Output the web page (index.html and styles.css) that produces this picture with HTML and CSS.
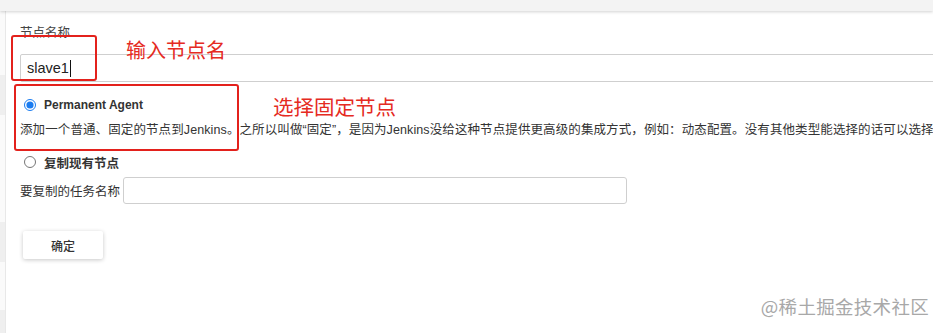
FILE: index.html
```html
<!DOCTYPE html>
<html lang="zh-CN">
<head>
<meta charset="utf-8">
<title>新建节点</title>
<link rel="stylesheet" href="styles.css">
</head>
<body>
<div class="topbar"></div>
<div class="layout">
  <aside class="sidebar">
    <div class="side-block b1"></div>
    <div class="side-block b2"></div>
    <div class="side-block b3"></div>
  </aside>
  <main class="main">
    <div class="field-label">节点名称</div>
    <div class="name-input"><span class="name-value">slave1</span><span class="caret"></span></div>
    <label class="option">
      <input class="radio" type="radio" name="mode" checked>
      <span class="option-title">Permanent Agent</span>
    </label>
    <div class="desc">添加一个普通、固定的节点到Jenkins。之所以叫做“固定”，是因为Jenkins没给这种节点提供更高级的集成方式，例如：动态配置。没有其他类型能选择的话可以选择</div>
    <label class="option option-copy">
      <input class="radio" type="radio" name="mode">
      <span class="option-title cjk">复制现有节点</span>
    </label>
    <div class="copy-row">
      <span class="copy-label">要复制的任务名称</span>
      <input class="copy-input" type="text">
    </div>
    <button class="ok-btn" type="button">确定</button>

    <div class="mark mark-name"></div>
    <div class="mark mark-agent"></div>
    <div class="note note-name">输入节点名</div>
    <div class="note note-agent">选择固定节点</div>
  </main>
</div>
<div class="watermark">@稀土掘金技术社区</div>
</body>
</html>
```

FILE: styles.css
```css
html, body {
  margin: 0;
  padding: 0;
  background: #fff;
  overflow: hidden;
  height: 333px;
}
body {
  font-family: "Liberation Sans", "Noto Sans CJK SC", sans-serif;
  color: #333;
  position: relative;
}
.topbar {
  height: 11px;
  background: #f3f3f3;
  box-shadow: 0 1px 3px rgba(0,0,0,0.18);
  position: relative;
  z-index: 2;
}
.layout {
  display: flex;
  height: 322px;
}
.sidebar {
  width: 5px;
  flex: none;
  border-right: 1px solid #e8e8e8;
  background: #fafafa;
  position: relative;
}
.side-block {
  position: absolute;
  left: 0;
  width: 5px;
  background: #efefef;
}
.side-block.b1 { top: 64px; height: 40px; }
.side-block.b2 { top: 211px; height: 40px; }
.side-block.b3 { top: 299px; height: 30px; }

.main {
  flex: 1;
  padding-left: 14px;
  position: relative;
  min-width: 0;
}
.field-label {
  margin-top: 14px;
  font-size: 12.5px;
  line-height: 16px;
  color: #444;
}
.name-input {
  display: flex;
  align-items: center;
  box-sizing: border-box;
  margin-top: 13px;
  width: 1000px;
  height: 28px;
  border: 1px solid #cfcfcf;
  border-radius: 2px;
  padding: 0 6px;
  font-family: "Liberation Sans", sans-serif;
  font-size: 14.5px;
  color: #222;
}
.caret {
  width: 1px;
  height: 17px;
  margin-left: 1px;
  background: #111;
}
.option {
  display: flex;
  align-items: center;
  height: 20px;
  margin-top: 13px;
}
.radio {
  margin: 0 0 0 4px;
  width: 12px;
  height: 12px;
  accent-color: #1a7cf0;
}
.option-title {
  margin-left: 8px;
  font-size: 12px;
  font-weight: bold;
  color: #333;
}
.option-title.cjk {
  font-size: 12.5px;
}
.desc {
  margin-top: 7px;
  font-size: 12.5px;
  line-height: 16px;
  white-space: nowrap;
  color: #333;
  letter-spacing: 0.1px;
}
.option-copy {
  margin-top: 14px;
}
.copy-row {
  display: flex;
  align-items: center;
  margin-top: 5px;
}
.copy-label {
  font-size: 12.5px;
  color: #333;
  width: 103px;
}
.copy-input {
  box-sizing: border-box;
  width: 504px;
  height: 27px;
  border: 1px solid #cfcfcf;
  border-radius: 3px;
  margin: 0;
  outline: none;
}
.ok-btn {
  display: block;
  margin: 27px 0 0 3px;
  width: 80px;
  height: 28px;
  border: none;
  border-radius: 2px;
  background: #fff;
  box-shadow: 0 1px 4px rgba(0,0,0,0.22);
  font-family: "Noto Sans CJK SC", sans-serif;
  font-size: 12px;
  font-weight: 500;
  color: #333;
  padding: 0;
}
.mark {
  position: absolute;
  box-sizing: border-box;
  border: 2px solid #e3211c;
  border-radius: 3px;
}
.mark-name {
  left: 5px;
  top: 24px;
  width: 86px;
  height: 46px;
}
.mark-agent {
  left: 8px;
  top: 73px;
  width: 225px;
  height: 67px;
}
.note {
  position: absolute;
  font-family: "Noto Sans CJK SC", sans-serif;
  font-weight: 400;
  color: #e52a22;
  white-space: nowrap;
}
.note-name {
  left: 120px;
  top: 27px;
  font-size: 20px;
  line-height: 24px;
}
.note-agent {
  left: 267px;
  top: 83px;
  font-size: 20.5px;
  line-height: 24px;
}
.watermark {
  position: absolute;
  right: 4px;
  bottom: 14px;
  font-family: "Noto Sans CJK SC", sans-serif;
  font-size: 18.5px;
  color: #a8a8a8;
  letter-spacing: 0.3px;
}
```
